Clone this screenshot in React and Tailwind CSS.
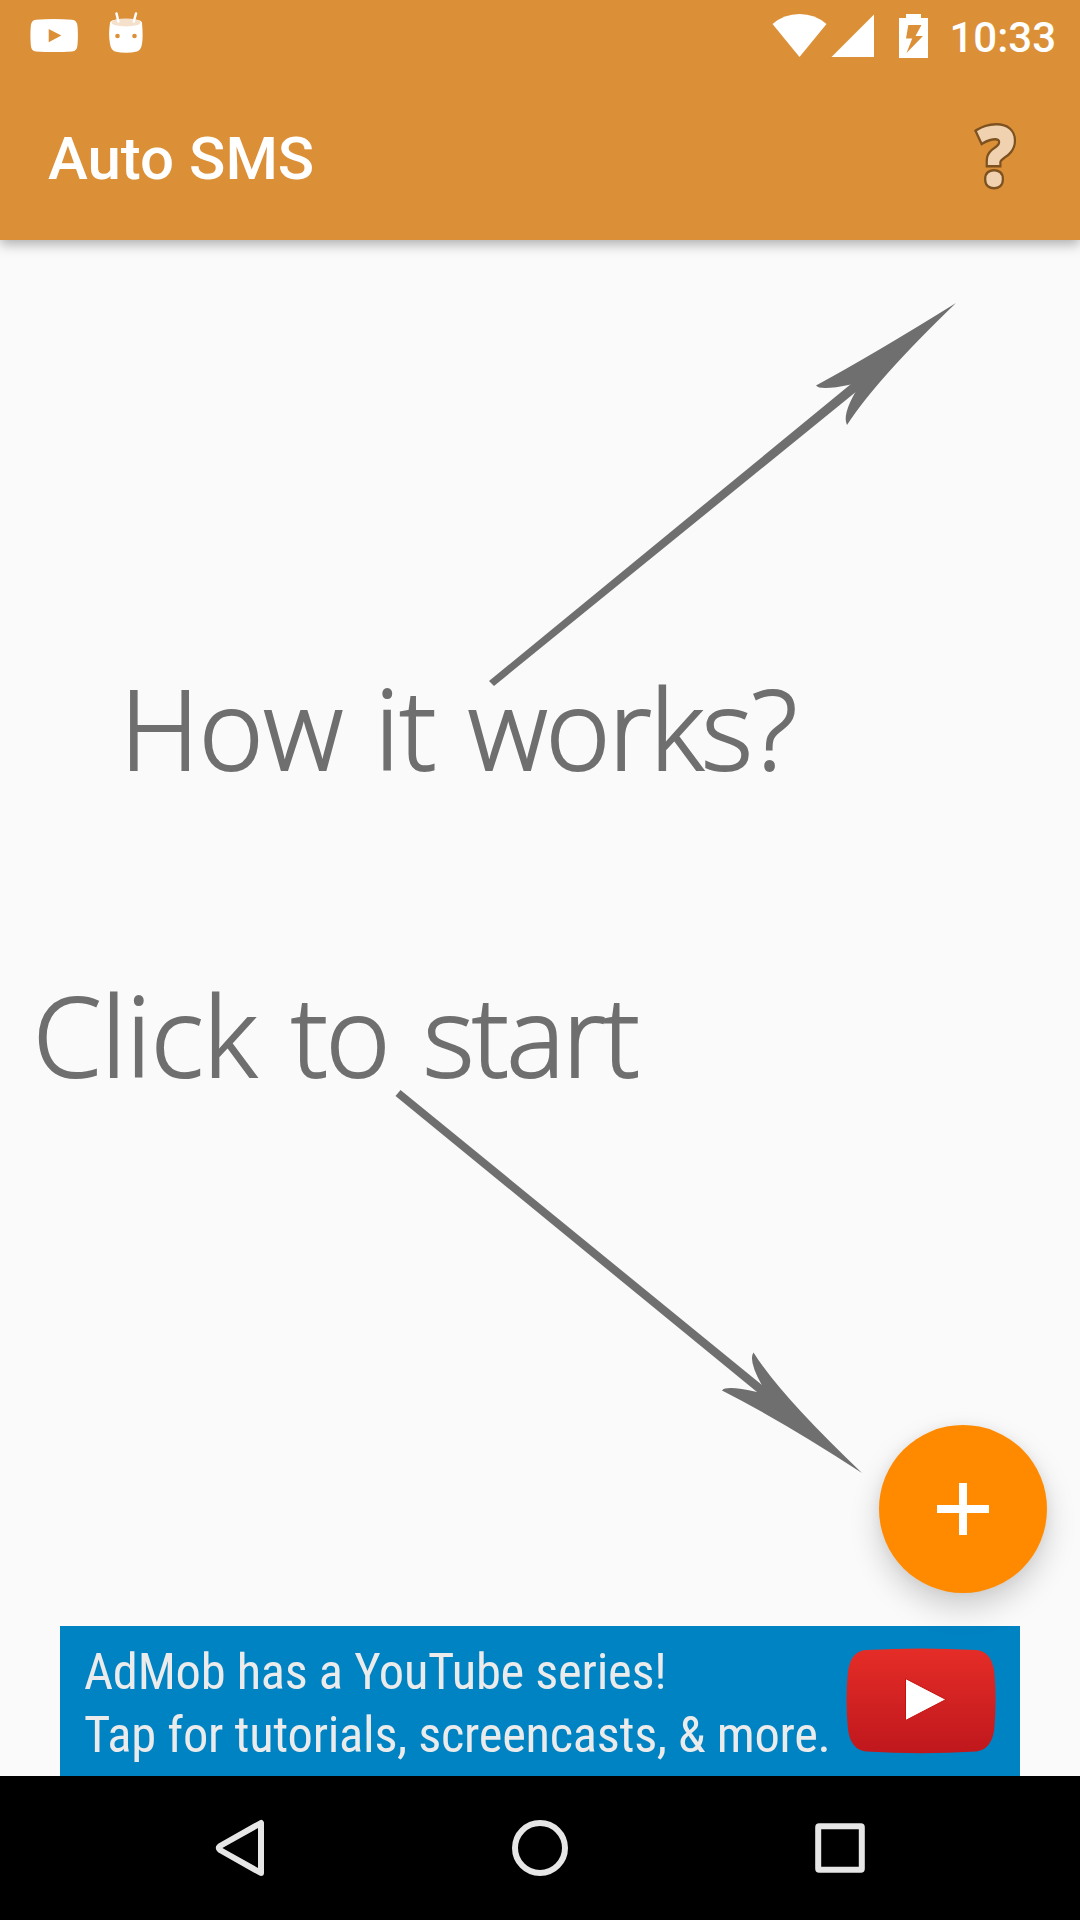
function StatusBar() {
  return (
    <div className="flex h-[72px] items-start justify-between text-white">
      <div className="flex pl-[30px] pt-3">
        <svg width="48" height="48" viewBox="30 12 48 48" fill="#fff">
          <path
            fillRule="evenodd"
            d="M36 19.8Q54 18.4 72 19.8Q77 20.3 77.5 26Q78.3 35.5 77.5 45Q77 51 72 51.5Q54 52.6 36 51.5Q31.200 51 30.800 45Q30 35.500 30.800 26Q31.200 20.300 36 19.800ZM48.700 29V42.300L61.300 35.600Z"
          />
        </svg>
        <svg className="ml-[22px]" width="52" height="48" viewBox="100 12 52 48">
          <path
            d="M110 23Q110 19 126 19Q142 19 142 23Q143.200 36 142 44Q141 50 137 51.500Q126 54 115 51.500Q111 50 110 44Q108.200 34 110 23Z"
            fill="#fff"
          />
          <ellipse cx="126" cy="22.500" rx="14.600" ry="3.900" fill="#f5e0cb" />
          <path d="M116.500 13.500L118.400 21.500M136 13.500L133.800 21.500" stroke="#fff" strokeWidth="2.500" strokeLinecap="round" />
          <circle cx="117.500" cy="36" r="2.300" fill="#dc9038" />
          <circle cx="134.500" cy="36" r="2.300" fill="#dc9038" />
        </svg>
      </div>
      <div className="flex pr-6 pt-3">
        <svg width="104" height="48" viewBox="771 12 104 48" fill="#fff">
          <path d="M772.500 24Q784 14 799.500 14Q815 14 826.500 24L799.500 57Z" />
          <path d="M874 14.500V57H831.500Z" />
        </svg>
        <svg className="ml-6" width="30" height="48" viewBox="899 12 30 48" fill="#fff">
          <path
            fillRule="evenodd"
            d="M906 14H921V18H928V58H899V18H906ZM908.300 25L906 38.500H912.200L906.500 53L923 36H915.500L921.500 25Z"
          />
        </svg>
        <div className="ml-[20px] mt-[2px] h-[48px] whitespace-nowrap font-['Roboto',sans-serif] text-[42px] leading-[48px] font-medium">
          10:33
        </div>
      </div>
    </div>
  );
}

function Toolbar() {
  return (
    <div className="flex h-[168px] items-center justify-between pr-[60px] pl-12">
      <h1 className="mt-1.5 font-['Roboto',sans-serif] text-[60px] leading-[70px] font-medium text-white">Auto SMS</h1>
      <button
        aria-label="Help"
        className="mb-1 h-[84px] w-[48px] scale-x-[0.9] text-center font-['Open_Sans',sans-serif] text-[84px] leading-[84px] font-extrabold text-[#f0d2b0] [-webkit-text-stroke:5px_#7d5220] [paint-order:stroke_fill]"
      >
        ?
      </button>
    </div>
  );
}

function Hints() {
  return (
    <main className="flex h-[1386px] flex-col pt-[63px] font-['Open_Sans',sans-serif] text-[110px] leading-[83px] font-light text-[#6f6f6f] [-webkit-text-stroke:2px_#6f6f6f]">
      <svg className="ml-[489px] shrink-0" width="467" height="383" viewBox="489 303 467 383" fill="#6f6f6f">
        <path d="M489 681L851 384L870 378L857 391L494 686Z" />
        <path d="M956 303Q874 354 816 385.500Q820 391 851 384.500L856 391Q842 415 847 425Q876 380 956 303Z" />
      </svg>
      <p className="ml-[120px] whitespace-nowrap">
        How <span className="ml-[3px]">it</span> <span className="ml-[3px] tracking-[-1.6px]">works?</span>
      </p>
      <p className="mt-[224px] ml-[33px] whitespace-nowrap">
        Click <span className="ml-[6px] tracking-[-2px]">to</span> <span className="ml-[6px] tracking-[-2.3px]">start</span>
      </p>
      <svg className="mt-[14px] ml-[395px] shrink-0" width="467" height="383" viewBox="395 1090 467 383" fill="#6f6f6f">
        <path d="M400.500 1090L762 1385L776 1398L757 1392L395.500 1096Z" />
        <path d="M862 1473Q780 1395 753.500 1352.500Q748 1360 762 1385.500L757 1392Q726 1385 722 1390.500Q784 1422 862 1473Z" />
      </svg>
    </main>
  );
}

function AddButton() {
  return (
    <button
      aria-label="Add"
      className="absolute top-[1425px] left-[879px] flex size-[168px] items-center justify-center rounded-full bg-[#ff8a00] shadow-[0_14px_30px_rgba(0,0,0,0.18),0_0_12px_rgba(0,0,0,0.05)]"
    >
      <svg width="52" height="52" viewBox="0 0 52 52" fill="#fff">
        <path d="M22 0H30V22H52V30H30V52H22V30H0V22H22Z" />
      </svg>
    </button>
  );
}

function AdBanner() {
  return (
    <section className="relative mx-[60px] flex h-[150px] items-start justify-between bg-[#0083c3] pr-6 pl-6">
      <div className="w-[750px] pt-[14px] font-['Roboto_Condensed','Roboto',sans-serif] text-[50.5px] leading-[63px] tracking-[-0.25px] whitespace-nowrap text-[#ebebeb] [font-stretch:75%]">
        <p>AdMob has a YouTube series!</p>
        <p>Tap for tutorials, screencasts, &amp; more.</p>
      </div>
      <svg className="mt-[22px]" width="150" height="106" viewBox="846 1648 150 106">
        <defs>
          <linearGradient id="badge" x1="0" y1="0" x2="0" y2="1">
            <stop offset="0" stopColor="#e52d27" />
            <stop offset="1" stopColor="#bf171d" />
          </linearGradient>
        </defs>
        <path
          d="M866 1650Q921 1647 976 1650Q991 1651 994.200 1671Q997 1700 994.200 1730Q991 1750 976 1751.500Q921 1755 866 1751.500Q851 1750 848 1730Q845 1700 848 1671Q851 1651 866 1650Z"
          fill="url(#badge)"
        />
        <path d="M905.500 1678.500V1720.500L946 1699.500Z" fill="#fff" stroke="#c8100f" strokeWidth="1" />
      </svg>
    </section>
  );
}

function NavBar() {
  return (
    <nav className="flex h-36 items-center justify-between bg-black pr-[215px] pl-[215px]">
      <svg width="50" height="58" viewBox="215 1819 50 58" fill="none">
        <path d="M261 1823V1873L220 1850Q217.500 1848 220 1846Z" stroke="#e6e6e6" strokeWidth="6" strokeLinejoin="round" />
      </svg>
      <svg width="56" height="56" viewBox="0 0 56 56" fill="none">
        <circle cx="28" cy="28" r="25" stroke="#e6e6e6" strokeWidth="6" />
      </svg>
      <svg width="50" height="50" viewBox="0 0 50 50" fill="none">
        <rect x="3.200" y="3.200" width="43.600" height="43.600" rx="1" stroke="#e6e6e6" strokeWidth="6" />
      </svg>
    </nav>
  );
}

export default function App() {
  return (
    <div className="relative flex h-[1920px] w-[1080px] flex-col overflow-hidden bg-[#fafafa]">
      <header className="h-[240px] shrink-0 bg-[#db9038] shadow-[0_4px_12px_rgba(0,0,0,0.32)]">
        <StatusBar />
        <Toolbar />
      </header>
      <Hints />
      <AdBanner />
      <NavBar />
      <AddButton />
    </div>
  );
}
